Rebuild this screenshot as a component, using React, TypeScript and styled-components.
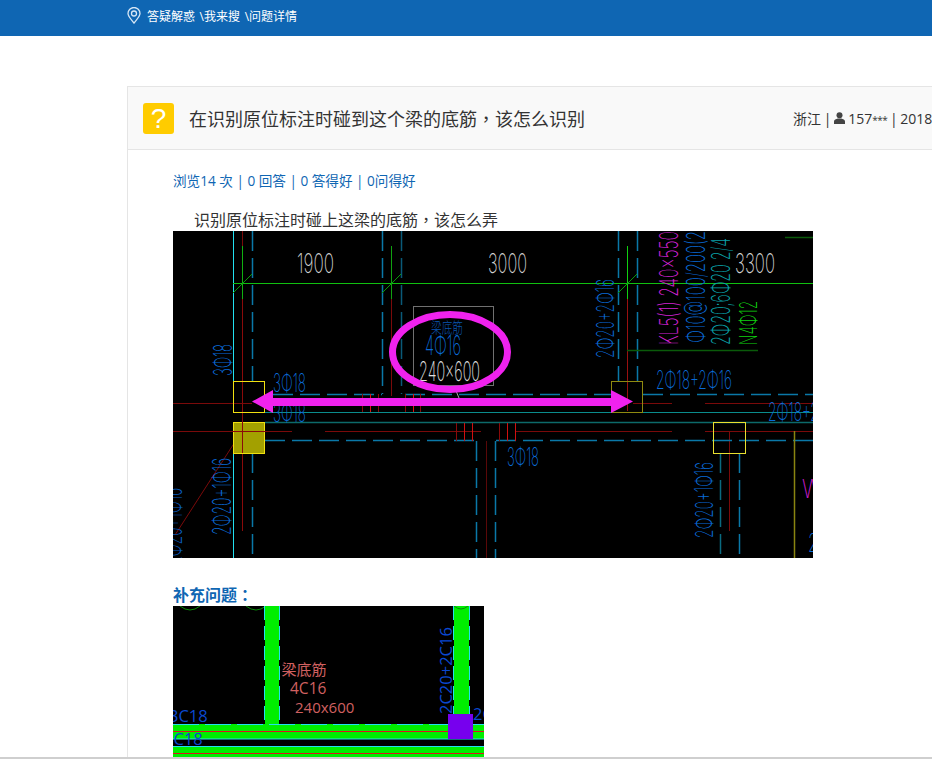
import React from 'react';
import styled, { createGlobalStyle } from 'styled-components';

const Global = createGlobalStyle`
  html, body { margin: 0; padding: 0; height: 100%; overflow: hidden; background: #fff; }
  body { font-family: "Open Sans", "Noto Sans CJK TC", "Liberation Sans", sans-serif; color: #333; }
`;
const Shell = styled.div`height: 100vh; display: flex; flex-direction: column; overflow: hidden;`;
const Viewport = styled.div`flex: 1; min-height: 0; overflow: hidden;`;
const BottomRule = styled.div`height: 2px; background: #cfcfcf; flex: none;`;
const TopBar = styled.header`height: 36px; box-sizing: border-box; padding: 0 0 5px 127px; background: #0f66b3; display: flex; align-items: center; gap: 6px; color: #fff; font-size: 12px;`;
const Crumbs = styled.span`white-space: pre; word-spacing: 1.5px;`;
const Panel = styled.section`margin: 50px 0 0 127px; width: 1040px; border: 1px solid #e5e5e5; box-sizing: border-box;`;
const PanelHead = styled.div`height: 63px; box-sizing: border-box; background: #f9f9f9; border-bottom: 1px solid #e5e5e5; display: flex; align-items: center; padding-left: 15px;`;
const Badge = styled.div`width: 31px; height: 31px; border-radius: 3px; background: #ffcc00; color: #fff; font: 28px/31px "Liberation Sans", sans-serif; text-align: center; flex: none;`;
const Title = styled.h1`margin: 0 0 0 15px; font-size: 18px; font-weight: 400; color: #333; width: 604px; white-space: nowrap;`;
const Meta = styled.div`display: flex; align-items: center; gap: 3px; font-size: 14px; color: #333; white-space: nowrap; word-spacing: -1px;`;
const Stars = styled.span`font-size: 10px; letter-spacing: -0.5px;`;
const PanelBody = styled.div`padding: 22px 0 0 45px;`;
const Stats = styled.div`font-size: 13.6px; line-height: 18px; color: #0f66b3;`;
const Lead = styled.p`margin: 19px 0 0; padding-left: 21px; font-size: 16px; line-height: 22px; height: 22px; color: #333;`;
const Figure = styled.svg`display: block;`;
const SubHead = styled.h2`margin: 26px 0 0; font-size: 16px; line-height: 22px; height: 22px; font-weight: 700; color: #0f66b3;`;

type T = { x: number; y: number; w: number; s: number; c: string; r?: boolean; children: string };
const Cad = ({ x, y, w, s, c, r, children }: T) => (
  <text
    transform={`translate(${x} ${y})${r ? ' rotate(-90)' : ''}`}
    fontFamily="Inter, 'Noto Sans CJK SC', sans-serif"
    fontWeight={200}
    fontSize={s}
    fill={c}
    textLength={w}
    lengthAdjust="spacingAndGlyphs"
  >
    {children}
  </text>
);

const H = ({ x1, x2, y, c, d, w = 1 }: { x1: number; x2: number; y: number; c: string; d?: string; w?: number }) => (
  <line x1={x1} x2={x2} y1={y} y2={y} stroke={c} strokeWidth={w} strokeDasharray={d} />
);
const V = ({ x, y1, y2, c, d, w = 1 }: { x: number; y1: number; y2: number; c: string; d?: string; w?: number }) => (
  <line x1={x} x2={x} y1={y1} y2={y2} stroke={c} strokeWidth={w} strokeDasharray={d} />
);

const BLUE = '#0a6ad6';
const DASH = '#0a78a8';
const DR = '#7a0a0a';
const D = '20 7';
const SKETCH_BLUE = '#0a48d0';

const Drawing = () => (
  <Figure width={640} height={327} viewBox="0 0 640 327" style={{ background: '#000' }}>
    {/* dark red axes */}
    <V x={69.5} y1={0} y2={48} c={DR} />
    <V x={69.5} y1={68} y2={300} c="#8a0a0a" />
    <V x={218.5} y1={68} y2={165} c={DR} />
    <V x={454.5} y1={68} y2={180} c="#9a1010" />
    <V x={313.5} y1={210} y2={327} c="#5a0808" />
    <V x={556.5} y1={200} y2={300} c={DR} />
    <H x1={0} x2={79} y={172.5} c={DR} />
    <H x1={460} x2={499} y={172.5} c={DR} />
    <H x1={532} x2={640} y={172.5} c={DR} />
    <H x1={0} x2={60} y={200.5} c={DR} />
    <H x1={92} x2={119} y={200.5} c={DR} />
    <H x1={152} x2={308} y={200.5} c={DR} />
    <H x1={342} x2={499} y={200.5} c={DR} />
    <H x1={532} x2={640} y={200.5} c={DR} />
    <line x1={69} y1={200} x2={2} y2={304} stroke={DR} />
    {/* dashed walls */}
    <V x={79.5} y1={0} y2={150} c={DASH} w={1.5} d={D} />
    <V x={79.5} y1={222} y2={327} c={DASH} w={1.5} d={D} />
    <V x={209.5} y1={0} y2={163} c={DASH} w={1.5} d={D} />
    <V x={228.5} y1={0} y2={163} c="#0a5a78" w={1.5} d={D} />
    <V x={445.5} y1={0} y2={150} c={DASH} w={1.5} d={D} />
    <V x={464.5} y1={0} y2={150} c={DASH} w={1.5} d={D} />
    <V x={303.5} y1={210} y2={327} c={DASH} w={1.5} d={D} />
    <V x={322.5} y1={210} y2={327} c={DASH} w={1.5} d={D} />
    <V x={547.5} y1={222} y2={327} c="#0a6a80" w={1.5} d={D} />
    <V x={566.5} y1={222} y2={327} c={DASH} w={1.5} d={D} />
    <H x1={100} x2={209} y={163.5} c={DASH} w={1.5} d={D} />
    <H x1={232} x2={440} y={163.5} c={DASH} w={1.5} d={D} />
    <H x1={470} x2={640} y={163.5} c={DASH} w={1.5} d={D} />
    <H x1={92} x2={303} y={209.5} c={DASH} w={1.5} d={D} />
    <H x1={323} x2={640} y={209.5} c={DASH} w={1.5} d={D} />
    {/* teal beams */}
    <H x1={92} x2={640} y={181.5} c="#0a8c8c" />
    <H x1={92} x2={640} y={191.5} c="#0c6a6a" w={1.5} />
    {/* red ticks */}
    {[189.5, 197.5, 205.5, 232.5, 240.5, 247.5].map((x, i) => (
      <V key={x} x={x} y1={163} y2={181} c={i % 3 === 1 ? '#e01010' : '#8a0a0a'} />
    ))}
    {[283.5, 291.5, 299.5, 326.5, 334.5, 342.5].map((x, i) => (
      <V key={x} x={x} y1={192} y2={210} c={i % 3 === 0 ? '#8a0a0a' : '#d01010'} />
    ))}
    {/* grid */}
    <V x={60.5} y1={0} y2={150} c="#22e0f0" />
    <V x={60.5} y1={222} y2={327} c="#22e0f0" />
    <H x1={60} x2={640} y={52.5} c="#10c010" />
    <V x={69.5} y1={15} y2={68} c="#10b010" />
    <V x={218.5} y1={15} y2={68} c="#10a010" />
    <V x={454.5} y1={15} y2={68} c="#10d010" />
    <line x1={60} y1={62} x2={79} y2={43} stroke="#0a9a0a" />
    <line x1={209} y1={62} x2={228} y2={43} stroke="#0a9a0a" />
    <line x1={445} y1={62} x2={464} y2={43} stroke="#0a9a0a" />
    <H x1={454} x2={585} y={119.5} c="#0a5a0a" w={1.5} />
    <H x1={612} x2={640} y={6.5} c="#0a5a0a" w={1.5} />
    <V x={621.5} y1={200} y2={327} c="#8a8410" w={1.5} />
    {/* column boxes */}
    <rect x={60.5} y={150.5} width={31} height={31} fill="none" stroke="#f0e010" />
    <rect x={60.5} y={191.5} width={31} height={31} fill="#a3a000" stroke="#f0e010" />
    <line x1={69.5} x2={69.5} y1={191} y2={222} stroke="#8a0a0a" />
    <line x1={60} x2={92} y1={200.5} y2={200.5} stroke="#8a0a0a" />
    <rect x={438.5} y={150.5} width={31} height={31} fill="none" stroke="#8f8a10" />
    <rect x={540.5} y={191.5} width={32} height={31} fill="none" stroke="#e8e030" />
    {/* label box */}
    <rect x={240.5} y={75.5} width={80} height={79} fill="none" stroke="#707070" />
    <line x1={281} y1={155} x2={286} y2={167} stroke="#aaa" />
    {/* dimensions */}
    <Cad x={124} y={42} w={37} s={27} c="#d0d0d0">1900</Cad>
    <Cad x={315} y={42} w={39} s={27} c="#d0d0d0">3000</Cad>
    <Cad x={562} y={42} w={40} s={27} c="#d0d0d0">3300</Cad>
    {/* rebar labels */}
    <Cad x={100} y={161} w={33} s={26} c={BLUE}>3Φ18</Cad>
    <Cad x={100} y={191} w={33} s={26} c={BLUE}>3Φ18</Cad>
    <Cad x={59} y={145} w={32} s={26} c={BLUE} r>3Φ18</Cad>
    <Cad x={258} y={102} w={32} s={15} c="#0a55b0">梁底筋</Cad>
    <Cad x={252} y={124} w={36} s={27} c={BLUE}>4Φ16</Cad>
    <Cad x={246} y={150} w={61} s={27} c="#e0e0e0">240x600</Cad>
    <Cad x={441} y={127} w={79} s={25} c={BLUE} r>2Φ20+2Φ16</Cad>
    <Cad x={505} y={114} w={114} s={26} c="#d020d0" r>KL5(1) 240x550</Cad>
    <Cad x={532} y={112} w={112} s={26} c="#0a6ad6" r>Φ10@100/200(2</Cad>
    <Cad x={557} y={114} w={107} s={26} c="#0aa0a8" r>2Φ20;6Φ20 2/4</Cad>
    <Cad x={584} y={114} w={44} s={24} c="#10d010" r>N4Φ12</Cad>
    <Cad x={483} y={158} w={76} s={26} c={BLUE}>2Φ18+2Φ16</Cad>
    <Cad x={595} y={190} w={76} s={26} c={BLUE}>2Φ18+2Φ16</Cad>
    <Cad x={334} y={235} w={32} s={26} c={BLUE}>3Φ18</Cad>
    <Cad x={540} y={307} w={76} s={25} c={BLUE} r>2Φ20+1Φ16</Cad>
    <Cad x={58} y={304} w={77} s={26} c={BLUE} r>2Φ20+1Φ16</Cad>
    <Cad x={9} y={334} w={77} s={26} c="#0a5fc0" r>2Φ20+1Φ16</Cad>
    <Cad x={629} y={267} w={20} s={26} c="#c81cc8">W</Cad>
    <Cad x={635} y={321} w={10} s={26} c={BLUE}>2</Cad>
    {/* markup */}
    <ellipse cx={277} cy={121} rx={57.5} ry={37.5} fill="none" stroke="#f022ee" strokeWidth={7} />
    <polygon
      points="79,170.5 100,159 100,167 438,167 438,159 460,170.5 438,182 438,175 100,175 100,182"
      fill="#f022ee"
    />
  </Figure>
);

const Sketch = () => (
  <Figure width={311} height={151} viewBox="0 0 311 151" style={{ background: '#000' }}>
    <path d="M7 0 Q17 8 27 0 M73 0 Q83 8 93 0" fill="none" stroke="#0a8a0a" />
    <rect x={92} y={0} width={14} height={118} fill="#00ee00" />
    <rect x={281} y={0} width={15} height={108} fill="#00ee00" />
    <path d="M281 0 Q288 6 295 0" fill="none" stroke="#0a8a0a" />
    <V x={91.5} y1={0} y2={118} c="#22e0f0" d="14 6" />
    <V x={106.5} y1={0} y2={118} c="#22e0f0" d="14 6" />
    <V x={280.5} y1={0} y2={108} c="#22e0f0" d="14 6" />
    <V x={296.5} y1={0} y2={108} c="#22e0f0" d="14 6" />
    <rect x={0} y={118} width={311} height={15} fill="#00ee00" />
    <H x1={0} x2={311} y={118.5} c="#22e0f0" d="26 6" />
    <H x1={0} x2={311} y={133} c="#22e0f0" />
    <H x1={0} x2={311} y={125.5} c="#e01020" />
    <rect x={0} y={140} width={311} height={11} fill="#00ee00" />
    <H x1={0} x2={311} y={140.5} c="#22e0f0" />
    <H x1={0} x2={311} y={147.5} c="#e01020" />
    <rect x={275} y={108} width={25} height={25} fill="#7700ee" />
    <text x={108.5} y={69} fontFamily="'Noto Sans CJK SC', sans-serif" fontSize={15} fill="#d06060">梁底筋</text>
    <text x={117} y={88} fontFamily="'Open Sans', sans-serif" fontSize={15.5} fill="#d06060">4C16</text>
    <text x={122} y={107} fontFamily="'Open Sans', sans-serif" fontSize={15} fill="#d06060">240x600</text>
    <text x={-4} y={116} fontFamily="'Open Sans', sans-serif" fontSize={16.5} fill={SKETCH_BLUE}>3C18</text>
    <text x={-9} y={139} fontFamily="'Open Sans', sans-serif" fontSize={16.5} fill={SKETCH_BLUE}>4C18</text>
    <text x={300} y={114} fontFamily="'Open Sans', sans-serif" fontSize={16.5} fill={SKETCH_BLUE}>2C</text>
    <text transform="translate(279 108) rotate(-90)" fontFamily="'Open Sans', sans-serif" fontSize={16.5} fill={SKETCH_BLUE}>2C20+2C16</text>
  </Figure>
);

const PinIcon = () => (
  <svg width={14} height={17} viewBox="0 0 14 17" fill="none" stroke="#d6e6f5" strokeWidth={1.3}>
    <path d="M7 16 C4 12 1 9.5 1 6.5 A6 6 0 0 1 13 6.5 C13 9.5 10 12 7 16 Z" />
    <circle cx={7} cy={6.5} r={2.5} />
  </svg>
);
const UserIcon = () => (
  <svg width={11} height={12} viewBox="0 0 11 12" fill="#444">
    <circle cx={5.5} cy={3.2} r={3} />
    <path d="M0 12 V9.5 C0 7.5 2 7 3.8 6.4 H7.2 C9 7 11 7.5 11 9.5 V12 Z" />
  </svg>
);

export default function App() {
  return (
    <Shell>
      <Global />
      <Viewport>
        <TopBar>
          <PinIcon />
          <Crumbs>答疑解惑 \我来搜 \问题详情</Crumbs>
        </TopBar>
        <Panel>
          <PanelHead>
            <Badge>?</Badge>
            <Title>在识别原位标注时碰到这个梁的底筋，该怎么识别</Title>
            <Meta>
              <span>浙江 |</span>
              <UserIcon />
              <span>157<Stars>***</Stars> | 2018-07-20</span>
            </Meta>
          </PanelHead>
          <PanelBody>
            <Stats>浏览14 次 | 0 回答 | 0 答得好 | 0问得好</Stats>
            <Lead>识别原位标注时碰上这梁的底筋，该怎么弄</Lead>
            <Drawing />
            <SubHead>补充问题：</SubHead>
            <Sketch />
          </PanelBody>
        </Panel>
      </Viewport>
      <BottomRule />
    </Shell>
  );
}
